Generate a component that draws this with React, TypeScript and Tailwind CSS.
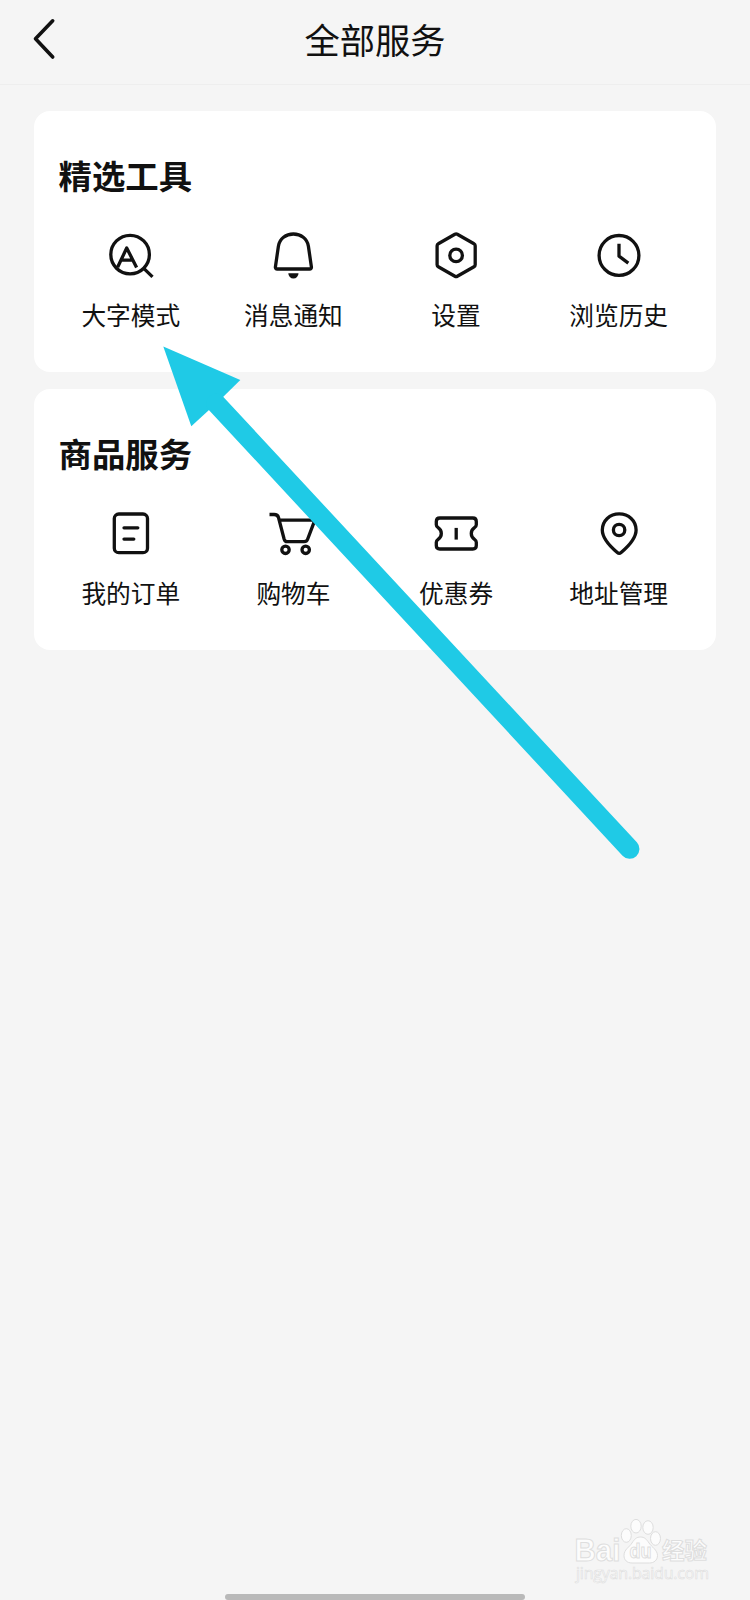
import type { ReactNode } from "react";

interface ServiceItem {
  label: string;
  icon: ReactNode;
}

interface ServiceSection {
  title: string;
  items: ServiceItem[];
}

const sections: ServiceSection[] = [
  {
    title: "精选工具",
    items: [
      {
        label: "大字模式",
        icon: (
          <>
            <circle cx="29.1" cy="29.6" r="19.3" />
            <path d="M16.6 42.3 25.7 23 35.6 42.4M19.5 35.1h12M43 43.6l8.5 8.3" />
          </>
        ),
      },
      {
        label: "消息通知",
        icon: (
          <>
            <path d="M14.2 44h32.4c1.3 0 2-.9 1.8-2.1l-3-20.7C44.2 13.7 37.9 9 30.4 9s-13.8 4.7-15 12.2l-3 20.7c-.2 1.200.5 2.100 1.800 2.100Z" />
            <path d="M25.3 48.2h10.2a5.1 5.4 0 0 1-10.2 0Z" fill="#111" stroke="none" />
          </>
        ),
      },
      {
        label: "设置",
        icon: (
          <>
            <path d="M28.900 9.200a2.400 2.400 0 0 1 2.400 0l16.700 9.500c.8.4 1.200 1.100 1.200 2v19c0 .9-.4 1.600-1.200 2L31.300 51.300a2.400 2.400 0 0 1-2.400 0l-16.600-9.600c-.8-.4-1.200-1.100-1.200-2v-19c0-.9.4-1.600 1.200-2Z" />
            <circle cx="30.1" cy="30.400" r="6.300" />
          </>
        ),
      },
      {
        label: "浏览历史",
        icon: (
          <>
            <circle cx="30" cy="30.400" r="19.900" />
            <path d="M30 18.700V31.200l9.300 6.900" />
          </>
        ),
      },
    ],
  },
  {
    title: "商品服务",
    items: [
      {
        label: "我的订单",
        icon: (
          <>
            <rect x="13.3" y="11" width="33.200" height="38.700" rx="4.500" />
            <path d="M23 24.800h13.800M23 36.100h9.800" strokeLinecap="round" />
          </>
        ),
      },
      {
        label: "购物车",
        icon: (
          <>
            <path d="M6.500 11.500h4.600c2.500 0 3.800.8 4.400 3l5.600 21.500c.6 2 1.500 2.700 3.200 2.700h16.700c2 0 3-.7 3.600-2.400l6.400-17c.5-1.400 0-2.200-1.500-2.200H16.300" />
            <circle cx="22.500" cy="46.800" r="3.700" />
            <circle cx="42.700" cy="46.800" r="3.700" />
          </>
        ),
      },
      {
        label: "优惠券",
        icon: (
          <>
            <path d="M13.800 15h33c2.200 0 3.500 1.300 3.500 3.500v3.300c0 1.300-.6 2.100-1.800 2.900-4.300 2.800-4.300 8.800 0 11.600 1.200.8 1.800 1.600 1.800 2.900v3.300c0 2.200-1.300 3.500-3.500 3.500h-33c-2.200 0-3.500-1.300-3.500-3.500v-3.300c0-1.300.6-2.100 1.800-2.900 4.300-2.800 4.300-8.800 0-11.600-1.200-.8-1.800-1.600-1.800-2.900v-3.300c0-2.200 1.300-3.500 3.500-3.500Z" />
            <path d="M30.200 24.900v11.700" />
          </>
        ),
      },
      {
        label: "地址管理",
        icon: (
          <>
            <path d="M28.300 49.600C20.500 43 13.300 35.300 13.300 27.100c0-9.300 7.500-16.200 16.900-16.200s16.900 6.900 16.900 16.200c0 8.200-7.200 15.900-15 22.500-1.300 1.100-2.500 1.100-3.800 0Z" />
            <circle cx="30.100" cy="27" r="5.700" />
          </>
        ),
      },
    ],
  },
];

function ServiceCard({ title, items }: ServiceSection) {
  return (
    <section className="h-[261px] rounded-2xl bg-white px-4 pt-[38px]">
      <h2 className="pt-px pl-[9px] text-[33.4px] leading-[50px] font-bold">{title}</h2>
      <div className="mt-[25px] grid grid-cols-4">
        {items.map((item) => (
          <button key={item.label} className="flex flex-col items-center">
            <svg
              className="size-[60px]"
              viewBox="0 0 60 60"
              fill="none"
              stroke="#111"
              strokeWidth="3.3"
              strokeLinejoin="round"
            >
              {item.icon}
            </svg>
            <span className="mt-[11px] text-[24.7px] leading-9">{item.label}</span>
          </button>
        ))}
      </div>
    </section>
  );
}

function Watermark() {
  return (
    <svg
      className="absolute right-[38px] bottom-[14px] h-[72px] w-[140px]"
      viewBox="0 0 140 72"
      fill="#fcfcfc"
      stroke="#dedede"
      strokeWidth="1"
    >
      <text x="2.5" y="47" fontFamily="'Liberation Sans', sans-serif" fontWeight="bold" fontSize="31" textLength="46" lengthAdjust="spacingAndGlyphs">Bai</text>
      <ellipse cx="54.3" cy="21.5" rx="5" ry="6.8" />
      <ellipse cx="64" cy="12.2" rx="5.2" ry="6.8" />
      <ellipse cx="76" cy="13.5" rx="5.2" ry="6.8" />
      <ellipse cx="83.5" cy="24.5" rx="5" ry="6.8" />
      <path d="M68.5 23c4 0 6 2.200 8.500 6s8.500 7 8.500 12.500c0 5-4 7.500-8 7.500H60c-5 0-8-3-8-7.500 0-6 5.500-8.500 8-12.500s4.500-6 8.500-6Z" />
      <text x="57.5" y="43.5" fontFamily="'Liberation Sans', sans-serif" fontWeight="bold" fontSize="20" textLength="22" lengthAdjust="spacingAndGlyphs">du</text>
      <text x="90" y="45" fontFamily="'Noto Sans CJK SC', sans-serif" fontWeight="bold" fontSize="22.5">经验</text>
      <text x="4" y="64.5" fontFamily="'Open Sans', sans-serif" fontSize="16" textLength="133" strokeWidth=".6">jingyan.baidu.com</text>
    </svg>
  );
}

export default function App() {
  return (
    <div className="relative flex h-[1600px] w-[750px] flex-col overflow-hidden bg-[#f5f5f5] font-['Noto_Sans_CJK_SC',sans-serif] text-[#111]">
      <header className="grid h-[85px] grid-cols-[90px_1fr_90px] border-b border-[#eeeeee]">
        <button className="flex items-start pt-3 pl-6" aria-label="返回">
          <svg className="h-[54px] w-10" viewBox="0 0 40 54" fill="none" stroke="#111" strokeWidth="3.6" strokeLinecap="round" strokeLinejoin="round">
            <path d="M28.7 8.8 11.5 26.800 28.700 45" />
          </svg>
        </button>
        <h1 className="pt-[13px] text-center text-[35.3px] leading-[52px]">全部服务</h1>
      </header>

      <main className="flex flex-1 flex-col gap-[17.5px] pt-[25.5px] pr-[34px] pl-[33.5px]">
        {sections.map((section) => (
          <ServiceCard key={section.title} {...section} />
        ))}
      </main>

      {/* стрелка-подсказка поверх карточек */}
      <svg className="pointer-events-none absolute inset-0 size-full" viewBox="0 0 750 1600" fill="#1fcae6">
        <path d="M163.3 346.5 240.3 380 223.3 396.7 209 410 191.300 426.300Z" />
        <path d="M216 403.3 629.7 849" stroke="#1fcae6" strokeWidth="19.5" strokeLinecap="round" />
      </svg>

      <Watermark />
      <div className="mx-auto h-1.5 w-[300px] rounded-full bg-[#b9b9b9]" />
    </div>
  );
}
